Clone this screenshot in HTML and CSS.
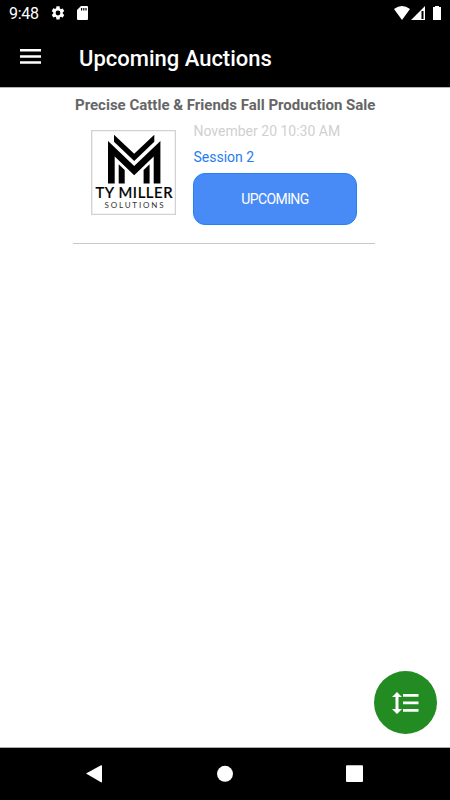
FILE: index.html
```
<!DOCTYPE html>
<html lang="en">
<head>
<meta charset="utf-8">
<title>Upcoming Auctions</title>
<link rel="stylesheet" href="styles.css">
</head>
<body>
<div class="status">
  <span class="time">9:48</span>
  <svg class="gear" width="16" height="16" viewBox="0 0 24 24"><path fill="#fff" d="M19.14 12.94c.04-.3.06-.61.06-.94s-.02-.64-.07-.94l2.03-1.58a.49.49 0 0 0 .12-.61l-1.92-3.32a.49.49 0 0 0-.59-.22l-2.39.96a7 7 0 0 0-1.62-.94l-.36-2.54A.48.48 0 0 0 13.92 2h-3.84a.48.48 0 0 0-.47.41l-.36 2.54a7 7 0 0 0-1.62.94l-2.39-.96a.48.48 0 0 0-.59.22L2.74 8.87a.48.48 0 0 0 .12.61l2.03 1.58a6 6 0 0 0 0 1.88l-2.03 1.58a.49.49 0 0 0-.12.61l1.92 3.32c.12.22.37.29.59.22l2.39-.96c.5.38 1.03.7 1.62.94l.36 2.54c.05.24.24.41.48.41h3.84c.24 0 .44-.17.47-.41l.36-2.54a7 7 0 0 0 1.62-.94l2.39.96c.22.08.47 0 .59-.22l1.92-3.32a.48.48 0 0 0-.12-.61zM12 15.6A3.6 3.6 0 1 1 12 8.400a3.600 3.600 0 0 1 0 7.200z"/></svg>
  <svg class="card" width="11" height="14" viewBox="0 0 11 14"><path fill="#fff" fill-rule="evenodd" d="M4 0h6a1 1 0 0 1 1 1v12a1 1 0 0 1-1 1H1a1 1 0 0 1-1-1V4zM4 2v2.500h1.200V2zm2.200 0v2.500h1.200V2zm2.200 0v2.500h1.200V2z"/></svg>
  <svg class="signals" width="50" height="16" viewBox="0 0 50 16"><path fill="#fff" d="M0 3Q8-3 16 3L8 14zM31 0v14H17z"/><path d="M27.500 5h2v8h-2z"/><path fill="#fff" d="M39 1h2V0h4v1h2v13h-8V1z"/></svg>
</div>
<header class="bar">
  <svg class="menu" width="21" height="15" viewBox="0 0 21 15"><path fill="#fff" d="M0 0h21v2.500H0zM0 6.200h21v2.500H0zM0 12.300h21v2.500H0z"/></svg>
  <h1>Upcoming Auctions</h1>
</header>
<main>
  <article class="auction">
    <h2>Precise Cattle &amp; Friends Fall Production Sale</h2>
    <div class="row">
      <svg class="logo" width="85" height="85" viewBox="91 130 85 85">
        <path fill="#fff" stroke="#d2d2d2" stroke-width="1.300" d="M91.700 130.700h83.700v83.700H91.700z"/>
        <path d="M114 134.800L134.200 153.700L154.300 134.800V141.700L134.200 161L114 141.700z"/>
        <path d="M108 141L134.200 166L160.400 141V183.600H153.700V156.500L134.200 175.300L114.700 156.500V183.600H108z"/>
        <path d="M118.700 164.300L124.700 170V183.600H118.700zM149.600 164.300L143.600 170V183.600H149.600z"/>
        <text class="brand" x="95.500" y="198" textLength="77">TY MILLER</text>
        <text class="sub" x="104.500" y="207.800" textLength="59">SOLUTIONS</text>
      </svg>
      <div class="info">
        <p class="date">November 20 10:30 AM</p>
        <p class="session">Session 2</p>
        <div class="button">UPCOMING</div>
      </div>
    </div>
  </article>
</main>
<div class="fab">
  <svg width="27" height="24" viewBox="0 0 27 24"><path fill="#fff" d="M5 1L10 6H6.500V18H10L5 23L0 18H3.500V6H0zM11 3h15.500v2.700H11zM11 10.500h15.500v2.700H11zM11 18h15.500v2.700H11z"/></svg>
</div>
<nav class="nav">
  <svg width="450" height="52" viewBox="0 0 450 52"><path fill="#fff" d="M86 25.500L101 17.200Q102 17 102 18V33.500Q102 35 101 34.300z"/><circle cx="225" cy="25.800" r="8" fill="#fff"/><rect x="346" y="17.300" width="17" height="16.700" rx="1" fill="#fff"/></svg>
</nav>
</body>
</html>
```

FILE: styles.css
```
* { box-sizing: border-box; margin: 0; padding: 0; }
body {
  width: 450px;
  height: 800px;
  display: flex;
  flex-direction: column;
  overflow: hidden;
  background: #fff;
  font-family: Roboto, sans-serif;
}
svg { display: block; flex: none; }
.status {
  height: 28px;
  display: flex;
  align-items: flex-start;
  padding: 6px 6px 0 9px;
  background: #000;
  color: #fff;
}
.time { width: 41px; font-size: 16px; line-height: 16px; letter-spacing: -0.300px; }
.gear { margin-top: -1px; }
.card { margin-left: 11px; }
.signals { margin-left: auto; }
.bar {
  height: 60px;
  display: flex;
  align-items: center;
  padding: 0 20px 1px;
  background: #000;
  border-bottom: 1px solid #b5b5b5;
  color: #fff;
}
.menu { margin-top: -1px; }
h1 { margin: 3px 0 0 38px; font-size: 22px; font-weight: 500; line-height: 28px; white-space: nowrap; }
main { flex: 1; }
.auction {
  width: 302px;
  height: 156px;
  margin-left: 73px;
  padding-top: 7px;
  border-bottom: 1px solid #c8c8c8;
}
h2 { padding-left: 2px; color: #666; font-size: 15px; font-weight: 700; line-height: 20px; text-align: center; white-space: nowrap; }
.row { display: flex; padding-left: 18px; }
.logo { margin-top: 15px; }
.brand { font-family: Lato, sans-serif; font-size: 14.800px; font-weight: 500; stroke: #000; stroke-width: 0.200px; }
.sub { font-family: Lato, sans-serif; font-size: 8px; fill: #333; }
.info { margin-left: 17.500px; padding-top: 3px; font-size: 14px; line-height: 26px; }
.date { color: #d0d0d0; }
.session { color: #1f7cf2; }
.button {
  width: 164px;
  height: 52px;
  margin: 3px 0 0 -0.500px;
  border: 1px solid #2482f5;
  border-radius: 12px;
  background: #488bf7;
  color: #fff;
  font-size: 14px;
  letter-spacing: -0.600px;
  line-height: 51px;
  text-align: center;
}
.fab {
  position: absolute;
  left: 374px;
  top: 671px;
  width: 63px;
  height: 63px;
  display: flex;
  align-items: center;
  justify-content: center;
  border-radius: 50%;
  background: #228b22;
}
.nav { height: 53px; border-top: 1px solid #aaa; background: #000; }
```
